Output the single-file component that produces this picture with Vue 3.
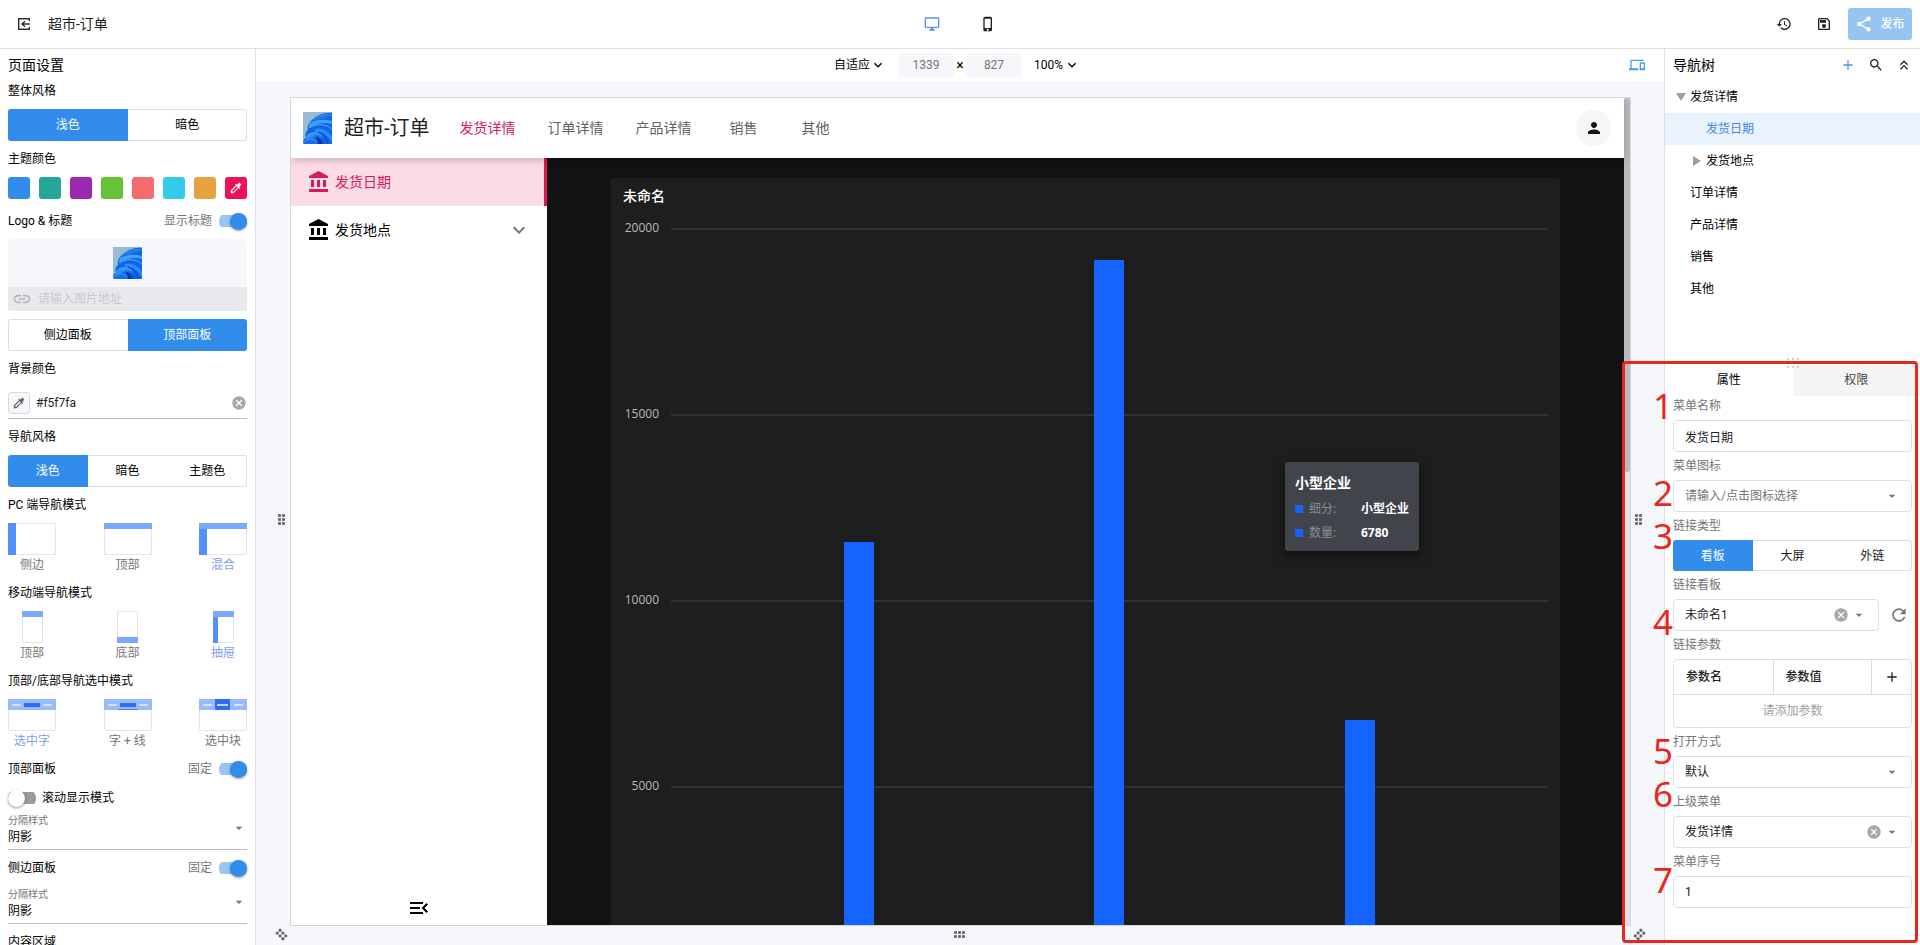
<script setup>
import { ref } from 'vue'

const icons = {
  desktop: 'M21 2H3c-1.1 0-2 .9-2 2v12c0 1.1.9 2 2 2h7v2H8v2h8v-2h-2v-2h7c1.1 0 2-.9 2-2V4c0-1.1-.9-2-2-2zm0 14H3V4h18v12z',
  phone: 'M15.5 1h-8C6.12 1 5 2.12 5 3.5v17C5 21.88 6.12 23 7.5 23h8c1.38 0 2.5-1.12 2.5-2.5v-17C18 2.12 16.88 1 15.5 1zm-4 21c-.83 0-1.5-.67-1.5-1.5s.67-1.5 1.5-1.5 1.5.67 1.5 1.5-.67 1.5-1.5 1.5zm4.5-4H7V4h9v14z',
  history: 'M13 3c-4.97 0-9 4.03-9 9H1l3.89 3.89.07.14L9 12H6c0-3.87 3.13-7 7-7s7 3.13 7 7-3.13 7-7 7c-1.93 0-3.68-.79-4.94-2.06l-1.42 1.42C8.27 19.99 10.51 21 13 21c4.97 0 9-4.03 9-9s-4.03-9-9-9zm-1 5v5l4.28 2.54.72-1.21-3.5-2.08V8H12z',
  save: 'M17 3H5c-1.11 0-2 .9-2 2v14c0 1.1.89 2 2 2h14c1.1 0 2-.9 2-2V7l-4-4zm2 16H5V5h11.17L19 7.83V19zm-7-7c-1.66 0-3 1.34-3 3s1.34 3 3 3 3-1.34 3-3-1.34-3-3-3zM6 6h9v4H6z',
  share: 'M18 16.08c-.76 0-1.44.3-1.96.77L8.91 12.7c.05-.23.09-.46.09-.7s-.04-.47-.09-.7l7.05-4.11c.54.5 1.25.81 2.04.81 1.66 0 3-1.34 3-3s-1.34-3-3-3-3 1.34-3 3c0 .24.04.47.09.7L8.04 9.81C7.5 9.31 6.79 9 6 9c-1.66 0-3 1.34-3 3s1.34 3 3 3c.79 0 1.5-.31 2.04-.81l7.12 4.16c-.05.21-.08.43-.08.65 0 1.61 1.31 2.92 2.92 2.92s2.92-1.31 2.92-2.92-1.31-2.92-2.92-2.92z',
  devices: 'M4 6h18V4H4c-1.1 0-2 .9-2 2v11H0v3h14v-3H4V6zm19 2h-6c-.55 0-1 .45-1 1v10c0 .55.45 1 1 1h6c.55 0 1-.45 1-1V9c0-.55-.45-1-1-1zm-1 9h-4v-7h4v7z',
  search: 'M15.5 14h-.79l-.28-.27C15.41 12.59 16 11.11 16 9.5 16 5.91 13.09 3 9.5 3S3 5.91 3 9.5 5.91 16 9.5 16c1.61 0 3.09-.59 4.23-1.57l.27.28v.79l5 4.99L20.49 19l-4.99-5zm-6 0C7.01 14 5 11.99 5 9.5S7.01 5 9.5 5 14 7.01 14 9.5 11.99 14 9.5 14z',
  add: 'M19 13h-6v6h-2v-6H5v-2h6V5h2v6h6v2z',
  cancel: 'M12 2C6.47 2 2 6.47 2 12s4.47 10 10 10 10-4.47 10-10S17.53 2 12 2zm5 13.59L15.59 17 12 13.41 8.41 17 7 15.59 10.59 12 7 8.41 8.41 7 12 10.59 15.59 7 17 8.41 13.41 12 17 15.59z',
  person: 'M12 12c2.21 0 4-1.79 4-4s-1.79-4-4-4-4 1.79-4 4 1.79 4 4 4zm0 2c-2.67 0-8 1.34-8 4v2h16v-2c0-2.66-5.33-4-8-4z',
  refresh: 'M17.65 6.35C16.2 4.9 14.21 4 12 4c-4.42 0-7.99 3.58-7.99 8s3.57 8 7.99 8c3.73 0 6.84-2.55 7.73-6h-2.08c-.82 2.33-3.04 4-5.65 4-3.31 0-6-2.69-6-6s2.69-6 6-6c1.66 0 3.14.69 4.22 1.78L13 11h7V4l-2.35 2.35z',
  link: 'M3.9 12c0-1.71 1.39-3.1 3.1-3.1h4V7H7c-2.76 0-5 2.24-5 5s2.24 5 5 5h4v-1.9H7c-1.71 0-3.1-1.39-3.1-3.1zM8 13h8v-2H8v2zm9-6h-4v1.9h4c1.71 0 3.1 1.39 3.1 3.1s-1.39 3.1-3.1 3.1h-4V17h4c2.76 0 5-2.24 5-5s-2.24-5-5-5z',
  picker: 'M20.71 5.63l-2.34-2.34c-.39-.39-1.02-.39-1.41 0l-3.12 3.12-1.93-1.91-1.41 1.41 1.42 1.42L3 16.25V21h4.75l8.92-8.92 1.42 1.42 1.41-1.41-1.92-1.92 3.12-3.12c.4-.4.4-1.03.01-1.42zM6.92 19L5 17.08l8.06-8.06 1.92 1.92L6.92 19z',
  collapse: 'M6 17.59L7.41 19 12 14.42 16.59 19 18 17.59l-6-6zM6 11l1.41 1.41L12 7.83l4.59 4.58L18 11l-6-6z',
  chevron: 'M16.59 8.59L12 13.17 7.41 8.59 6 10l6 6 6-6z',
  caret: 'M7 10l5 5 5-5z',
  bank: 'M4 10v7h3v-7H4zm6 0v7h3v-7h-3zM2 22h19v-3H2v3zm14-12v7h3v-7h-3zm-4.5-9L2 6v2h19V6l-9.5-5z',
  fold: 'M3 18h13v-2H3v2zm0-5h10v-2H3v2zm0-7v2h13V6H3zm18 9.59L17.42 12 21 8.41 19.59 7l-5 5 5 5L21 15.59z'
}

const swatches = [
  ['蓝色', 'c-blue'], ['青色', 'c-teal'], ['紫色', 'c-purple'], ['绿色', 'c-green'],
  ['红色', 'c-coral'], ['天蓝', 'c-cyan'], ['橙色', 'c-orange']
]
const pcModes = [
  { text: '侧边', kind: 'at-side' },
  { text: '顶部', kind: 'at-top' },
  { text: '混合', kind: 'at-both', on: true }
]
const mobileModes = [
  { text: '顶部', kind: 'at-top' },
  { text: '底部', kind: 'at-bottom' },
  { text: '抽屉', kind: 'at-both', on: true }
]
const pickModes = [
  { text: '选中字', kind: 'word', on: true },
  { text: '字 + 线', kind: 'line' },
  { text: '选中块', kind: 'block' }
]
const navTabs = ['发货详情', '订单详情', '产品详情', '销售', '其他']
const tree = [
  { text: '发货详情', mark: 'open', depth: 0 },
  { text: '发货日期', mark: '', depth: 1, on: true },
  { text: '发货地点', mark: 'shut', depth: 1 },
  { text: '订单详情', mark: '', depth: 0 },
  { text: '产品详情', mark: '', depth: 0 },
  { text: '销售', mark: '', depth: 0 },
  { text: '其他', mark: '', depth: 0 }
]
const axisTicks = [20000, 15000, 10000, 5000]
const bars = [11570, 19150, 6780]
const steps = [
  { n: 1, y: 22 }, { n: 2, y: 109 }, { n: 3, y: 152 }, { n: 4, y: 238 },
  { n: 5, y: 367 }, { n: 6, y: 410 }, { n: 7, y: 496 }
]

const showTitle = ref(true)
const topFixed = ref(true)
const scrollShow = ref(false)
const sideFixed = ref(true)
const bgColor = ref('#f5f7fa')
const menuName = ref('发货日期')
const menuIndex = ref('1')
</script>

<template>
  <div class="app">
    <svg class="defs" aria-hidden="true">
      <defs>
        <linearGradient id="sky" x1="0" y1="0" x2="1" y2="1">
          <stop offset="0" stop-color="#9dbdd3" />
          <stop offset="1" stop-color="#86b4d6" />
        </linearGradient>
        <linearGradient id="petal" x1="0" y1="0" x2="1" y2="1">
          <stop offset="0" stop-color="#46a8fb" />
          <stop offset="1" stop-color="#0747d3" />
        </linearGradient>
        <symbol id="bloom" viewBox="0 0 29 32" preserveAspectRatio="none">
          <rect width="29" height="32" fill="url(#sky)" />
          <path d="M29 1C22 0 14 3 9 8c-3 3-5 6-4 10-3 2-3 6-2 8-3 1-3 4-2 6h28z" fill="#0d68ec" />
          <path d="M29 2C21 1 13 4 8 9c6-1 12-3 21-3z" fill="url(#petal)" />
          <path d="M17 3c-3 2-5 4-7 6M22 2c-3 2-5 3-7 6" fill="none" stroke="#1e7df2" stroke-width=".8" />
          <path d="M7 11c7-4 15-4 22-2v3c-8-2-15-1-23 4z" fill="#3fa3fb" />
          <path d="M5 17c8-6 17-6 24-2v4c-8-4-14-5-24 1z" fill="#0f63ea" />
          <path d="M6 16c9-5 17-4 23 1" fill="none" stroke="#5ab4fd" stroke-width=".9" />
          <path d="M12 17c7-2 13 2 17 8v5c-4-7-9-10-17-10z" fill="#2b8cf8" />
          <path d="M3 25c4-6 12-7 18-1l1 8c-5-7-10-9-19-4z" fill="url(#petal)" />
          <path d="M1 31c4-5 10-5 14 1H1z" fill="#176ff0" />
          <path d="M12 24c4 1 7 4 8 8h-5c0-3-1-5-3-8z" fill="#0338b2" />
          <path d="M15 20c6 2 9 6 10 12" fill="none" stroke="#053fc0" />
          <path d="M1 30c4-4 9-4 13 0M4 24c5-4 10-4 15 0" fill="none" stroke="#4fadfc" stroke-width=".8" />
        </symbol>
      </defs>
    </svg>

    <header class="topbar">
      <div class="topbar-left">
        <button class="icon-btn" aria-label="返回">
          <svg class="i16 stroked" viewBox="0 0 16 16">
            <path d="M13.3 5V2.7H2.7v10.6h10.6V11M14 8H6M9 5.2L6 8l3 2.8" />
          </svg>
        </button>
        <span class="app-title">超市-订单</span>
      </div>
      <div class="topbar-mid">
        <button class="icon-btn blue" aria-label="桌面端"><svg class="i16" viewBox="0 0 24 24"><path :d="icons.desktop" /></svg></button>
        <button class="icon-btn" aria-label="移动端"><svg class="i16" viewBox="0 0 24 24"><path :d="icons.phone" /></svg></button>
      </div>
      <div class="topbar-right">
        <button class="icon-btn" aria-label="历史"><svg class="i16" viewBox="0 0 24 24"><path :d="icons.history" /></svg></button>
        <button class="icon-btn" aria-label="保存"><svg class="i16" viewBox="0 0 24 24"><path :d="icons.save" /></svg></button>
        <button class="publish"><svg class="i18" viewBox="0 0 24 24"><path :d="icons.share" /></svg>发布</button>
      </div>
    </header>

    <div class="work">
      <aside class="settings">
        <h2 class="panel-title">页面设置</h2>
        <h3 class="sect">整体风格</h3>
        <div class="seg"><button class="on">浅色</button><button>暗色</button></div>

        <h3 class="sect">主题颜色</h3>
        <div class="swatches">
          <button v-for="s in swatches" :key="s[1]" :class="['swatch', s[1]]" :aria-label="s[0]"></button>
          <button class="swatch c-pink" aria-label="自定义颜色"><svg class="i14" viewBox="0 0 24 24"><path :d="icons.picker" /></svg></button>
        </div>

        <div class="row">
          <h3>Logo &amp; 标题</h3>
          <label class="sw-label">显示标题<input v-model="showTitle" class="switch" type="checkbox" /></label>
        </div>
        <div class="logo-box">
          <div class="logo-view"><svg class="bloom"><use href="#bloom" /></svg></div>
          <label class="logo-url">
            <svg class="i20" viewBox="0 0 24 24"><path :d="icons.link" /></svg>
            <input type="text" placeholder="请输入图片地址" aria-label="图片地址" />
          </label>
        </div>
        <div class="seg gap-top"><button>侧边面板</button><button class="on">顶部面板</button></div>

        <h3 class="sect">背景颜色</h3>
        <div class="color-field">
          <button class="pick" aria-label="取色"><svg class="i14" viewBox="0 0 24 24"><path :d="icons.picker" /></svg></button>
          <input v-model="bgColor" type="text" aria-label="背景颜色" />
          <button class="clear" aria-label="清除"><svg class="i16" viewBox="0 0 24 24"><path :d="icons.cancel" /></svg></button>
        </div>

        <h3 class="sect">导航风格</h3>
        <div class="seg"><button class="on">浅色</button><button>暗色</button><button>主题色</button></div>

        <h3 class="sect">PC 端导航模式</h3>
        <div class="modes">
          <button v-for="m in pcModes" :key="m.text" :class="['mode', { on: m.on }]">
            <span :class="['thumb', m.kind]"><i class="bar-h"></i><i class="bar-v"></i></span>{{ m.text }}
          </button>
        </div>

        <h3 class="sect">移动端导航模式</h3>
        <div class="modes">
          <button v-for="m in mobileModes" :key="m.text" :class="['mode', { on: m.on }]">
            <span :class="['thumb', 'narrow', m.kind]"><i class="bar-h"></i><i class="bar-v"></i></span>{{ m.text }}
          </button>
        </div>

        <h3 class="sect">顶部/底部导航选中模式</h3>
        <div class="modes">
          <button v-for="m in pickModes" :key="m.text" :class="['mode', { on: m.on }]">
            <svg class="pick-thumb" viewBox="0 0 48 32">
              <rect x=".5" y=".5" width="47" height="31" rx="1" fill="#fff" stroke="#e4e4e4" />
              <rect width="48" height="11" fill="#97baff" />
              <path d="M4 6h9M35 6h9" stroke="#e6efff" stroke-width="1.4" />
              <rect v-if="m.kind !== 'block'" x="16" y="4" width="16" height="4" rx="1" fill="#2f6bee" />
              <path v-if="m.kind === 'line'" d="M14 10.4h20" stroke="#3e78ee" />
              <rect v-if="m.kind === 'block'" x="16" width="15" height="11" fill="#2f6bee" />
              <path v-if="m.kind === 'block'" d="M18 6h11" stroke="#fff" stroke-width="1.4" />
            </svg>{{ m.text }}
          </button>
        </div>

        <div class="row">
          <h3>顶部面板</h3>
          <label class="sw-label">固定<input v-model="topFixed" class="switch" type="checkbox" /></label>
        </div>
        <label class="scroll-row"><input v-model="scrollShow" class="switch" type="checkbox" />滚动显示模式</label>
        <label class="line-field">
          <span>分隔样式</span>
          <select><option>阴影</option></select>
          <svg class="i16" viewBox="0 0 24 24"><path :d="icons.caret" /></svg>
        </label>
        <div class="row">
          <h3>侧边面板</h3>
          <label class="sw-label">固定<input v-model="sideFixed" class="switch" type="checkbox" /></label>
        </div>
        <label class="line-field">
          <span>分隔样式</span>
          <select><option>阴影</option></select>
          <svg class="i16" viewBox="0 0 24 24"><path :d="icons.caret" /></svg>
        </label>
        <h3 class="sect">内容区域</h3>
      </aside>

      <main class="center">
        <div class="sizebar">
          <div></div>
          <div class="size-mid">
            <label class="mini-select fit"><select aria-label="适应方式"><option>自适应</option></select><svg class="i16" viewBox="0 0 24 24"><path :d="icons.chevron" /></svg></label>
            <input class="size" type="text" value="1339" aria-label="宽度" />
            <span class="times">×</span>
            <input class="size" type="text" value="827" aria-label="高度" />
            <label class="mini-select zoom"><select aria-label="缩放"><option>100%</option></select><svg class="i16" viewBox="0 0 24 24"><path :d="icons.chevron" /></svg></label>
          </div>
          <div class="size-end"><button class="icon-btn sky" aria-label="多端预览"><svg class="i16" viewBox="0 0 24 24"><path :d="icons.devices" /></svg></button></div>
        </div>

        <div class="stage">
          <span class="grip grip-left"><i v-for="d in 6" :key="d"></i></span>
          <div class="frame">
            <div class="site">
              <header class="site-head">
                <svg class="bloom"><use href="#bloom" /></svg>
                <strong class="site-title">超市-订单</strong>
                <nav class="site-tabs">
                  <a v-for="(t, i) in navTabs" :key="t" href="#" :class="{ on: i === 0 }">{{ t }}</a>
                </nav>
                <button class="avatar" aria-label="用户"><svg class="i18" viewBox="0 0 24 24"><path :d="icons.person" /></svg></button>
              </header>
              <div class="site-body">
                <nav class="side">
                  <a class="side-item on" href="#"><svg class="i24" viewBox="0 0 24 24"><path :d="icons.bank" /></svg>发货日期</a>
                  <a class="side-item" href="#"><svg class="i24" viewBox="0 0 24 24"><path :d="icons.bank" /></svg>发货地点<svg class="i24 more" viewBox="0 0 24 24"><path :d="icons.chevron" /></svg></a>
                  <button class="fold" aria-label="收起"><svg class="i24" viewBox="0 0 24 24"><path :d="icons.fold" /></svg></button>
                </nav>
                <section class="board">
                  <div class="card">
                    <h4>未命名</h4>
                    <div class="chart">
                      <div v-for="t in axisTicks" :key="t" class="tick"><span>{{ t }}</span><i></i></div>
                      <div class="bars">
                        <div v-for="b in bars" :key="b" class="band"><i :style="{ height: b / 200 + '%' }"></i></div>
                      </div>
                    </div>
                    <div class="tip">
                      <b>小型企业</b>
                      <div><i></i><span>细分:</span><em>小型企业</em></div>
                      <div><i></i><span>数量:</span><em>6780</em></div>
                    </div>
                  </div>
                </section>
              </div>
            </div>
            <div class="track"><div class="thumb-bar"></div></div>
          </div>
          <span class="grip grip-right"><i v-for="d in 6" :key="d"></i></span>
          <span class="grip corner corner-left"><i v-for="d in 6" :key="d"></i></span>
          <span class="grip wide"><i v-for="d in 6" :key="d"></i></span>
          <span class="grip corner corner-right"><i v-for="d in 6" :key="d"></i></span>
        </div>
      </main>

      <aside class="inspector">
        <section class="tree-pane">
          <div class="tree-head">
            <h2 class="panel-title">导航树</h2>
            <button class="icon-btn sky" aria-label="添加"><svg class="i16" viewBox="0 0 24 24"><path :d="icons.add" /></svg></button>
            <button class="icon-btn" aria-label="搜索"><svg class="i16" viewBox="0 0 24 24"><path :d="icons.search" /></svg></button>
            <button class="icon-btn" aria-label="全部收起"><svg class="i16" viewBox="0 0 24 24"><path :d="icons.collapse" /></svg></button>
          </div>
          <ul class="tree">
            <li v-for="n in tree" :key="n.text" :class="{ on: n.on, deep: n.depth }">
              <i :class="['mark', n.mark]"></i>{{ n.text }}
            </li>
          </ul>
          <span class="splitter"><i v-for="d in 6" :key="d"></i></span>
        </section>

        <section class="props">
          <div class="tabs"><button class="on">属性</button><button>权限</button></div>
          <div class="form">
            <label for="f-name">菜单名称</label>
            <input id="f-name" v-model="menuName" class="box" type="text" />
            <label for="f-icon">菜单图标</label>
            <div class="box-wrap">
              <input id="f-icon" class="box" type="text" placeholder="请输入/点击图标选择" />
              <svg class="i16 caret" viewBox="0 0 24 24"><path :d="icons.caret" /></svg>
            </div>
            <label id="f-type">链接类型</label>
            <div class="seg short" role="group" aria-labelledby="f-type"><button class="on">看板</button><button>大屏</button><button>外链</button></div>
            <label for="f-board">链接看板</label>
            <div class="with-refresh">
              <div class="box-wrap">
                <select id="f-board" class="box"><option>未命名1</option></select>
                <button class="clear" aria-label="清除"><svg class="i16" viewBox="0 0 24 24"><path :d="icons.cancel" /></svg></button>
                <svg class="i16 caret" viewBox="0 0 24 24"><path :d="icons.caret" /></svg>
              </div>
              <button class="icon-btn grey" aria-label="刷新"><svg class="i20" viewBox="0 0 24 24"><path :d="icons.refresh" /></svg></button>
            </div>
            <label id="f-params">链接参数</label>
            <table class="params" aria-labelledby="f-params">
              <thead>
                <tr><th>参数名</th><th>参数值</th><th class="plus"><button class="icon-btn" aria-label="添加参数"><svg class="i16" viewBox="0 0 24 24"><path :d="icons.add" /></svg></button></th></tr>
              </thead>
              <tbody><tr><td colspan="3">请添加参数</td></tr></tbody>
            </table>
            <label for="f-open">打开方式</label>
            <div class="box-wrap">
              <select id="f-open" class="box"><option>默认</option></select>
              <svg class="i16 caret" viewBox="0 0 24 24"><path :d="icons.caret" /></svg>
            </div>
            <label for="f-parent">上级菜单</label>
            <div class="box-wrap">
              <select id="f-parent" class="box"><option>发货详情</option></select>
              <button class="clear" aria-label="清除"><svg class="i16" viewBox="0 0 24 24"><path :d="icons.cancel" /></svg></button>
              <svg class="i16 caret" viewBox="0 0 24 24"><path :d="icons.caret" /></svg>
            </div>
            <label for="f-index">菜单序号</label>
            <input id="f-index" v-model="menuIndex" class="box" type="text" />
          </div>
        </section>
      </aside>
    </div>

    <div class="guide">
      <span v-for="s in steps" :key="s.n" :style="{ top: s.y + 'px' }">{{ s.n }}</span>
    </div>
  </div>
</template>

<style>
body { margin: 0; }
</style>

<style scoped>
* { box-sizing: border-box; }
.app {
  position: relative;
  display: flex;
  flex-direction: column;
  height: 100vh;
  overflow: hidden;
  background: #fff;
  color: #000;
  font: 12px/20px Roboto, "Noto Sans CJK SC", sans-serif;
}
h2, h3, h4, ul { margin: 0; padding: 0; font-weight: 400; font-size: 12px; }
button, input, select {
  margin: 0; padding: 0; border: 0; background: none; color: inherit; font: inherit; outline: 0;
}
button { cursor: pointer; }
input, select { min-width: 0; }
select { appearance: none; }
a { color: inherit; text-decoration: none; }
svg { flex: none; display: block; fill: currentColor; }
.defs { position: absolute; width: 0; height: 0; }
.stroked { fill: none; stroke: #303030; stroke-width: 1.4; }
.i14 { width: 14px; height: 14px; }
.i16 { width: 16px; height: 16px; }
.i18 { width: 18px; height: 18px; }
.i20 { width: 20px; height: 20px; }
.i24 { width: 24px; height: 24px; }
.bloom { width: 29px; height: 32px; }
.icon-btn { display: flex; align-items: center; justify-content: center; color: #212121; }
.icon-btn.blue { color: #5b8fe8; }
.icon-btn.sky { color: #4a9af0; }
.icon-btn.grey { color: #757575; }

/* top bar */
.topbar {
  flex: none;
  display: grid;
  grid-template-columns: 1fr auto 1fr;
  align-items: center;
  height: 49px;
  padding: 0 8px;
  border-bottom: 1px solid #e0e0e0;
}
.topbar-left { display: flex; align-items: center; gap: 16px; padding-left: 8px; }
.app-title { font-size: 14px; color: #212121; }
.topbar-mid { display: flex; gap: 40px; }
.topbar-right { display: flex; justify-content: flex-end; align-items: center; gap: 24px; }
.topbar-right .publish { margin-left: -8px; }
.publish {
  display: flex; align-items: center; justify-content: center; gap: 7px;
  width: 64px; height: 32px; border-radius: 3px; background: #97c5f3; color: #fff; font-weight: 500;
}

.work { flex: 1; min-height: 0; display: flex; }

/* settings */
.settings {
  flex: none; width: 256px; padding: 0 8px; overflow: hidden; border-right: 1px solid #e0e0e0;
}
.panel-title { font-size: 14px; line-height: 32px; }
.sect { margin: 8px 0; line-height: 20px; }
.panel-title + .sect { margin-top: 0; }
.seg { display: flex; height: 32px; border-radius: 3px; overflow: hidden; box-shadow: inset 0 0 0 1px #dcdee2; }
.seg button { flex: 1; }
.seg .on { background: #318cec; color: #fff; }
.seg.short { height: 31px; }
.gap-top { margin-top: 8px; }
.swatches { display: flex; justify-content: space-between; }
.swatch { display: flex; align-items: center; justify-content: center; width: 22px; height: 22px; border-radius: 3px; color: #fff; }
.c-blue { background: #318cec; }
.c-teal { background: #26a69a; }
.c-purple { background: #9c27b0; }
.c-green { background: #67c23a; }
.c-coral { background: #f56c6c; }
.c-cyan { background: #32ccea; }
.c-orange { background: #e6a23c; }
.c-pink { background: #ee1155; }
.row { display: flex; align-items: center; justify-content: space-between; height: 28px; margin-top: 4px; }
.swatches + .row { margin-top: 8px; }
.sw-label { display: flex; align-items: center; gap: 7px; color: #757575; }
.switch {
  appearance: none; display: flex; align-items: center; flex: none;
  width: 28px; height: 17px; cursor: pointer;
  background: linear-gradient(#9a9a9a, #9a9a9a) center / 28px 12px no-repeat;
  border-radius: 8px;
}
.switch::before {
  content: ""; width: 17px; height: 17px; border-radius: 50%; background: #fff;
  box-shadow: 0 1px 3px rgba(0, 0, 0, .4);
}
.switch:checked { justify-content: flex-end; background-image: linear-gradient(#98c5f5, #98c5f5); }
.switch:checked::before { background: #318cec; }
.logo-box { margin-top: 4px; border-radius: 3px; overflow: hidden; background: #f5f7fb; }
.logo-view { display: flex; align-items: center; justify-content: center; height: 48px; }
.logo-url { display: flex; align-items: center; gap: 6px; height: 24px; padding: 0 4px; background: #e8e9ed; color: #b4b6ba; }
.logo-url input { flex: 1; }
.logo-url input::placeholder { color: #c8cacf; }
.color-field { display: flex; align-items: center; gap: 6px; height: 32px; border-bottom: 1px solid #bdbdbd; }
.color-field input { flex: 1; color: #212121; }
.pick { display: flex; align-items: center; justify-content: center; width: 22px; height: 22px; border: 1px solid #d4d9e4; border-radius: 3px; background: #f5f7fb; color: #616161; }
.clear { color: #a8a8a8; }
.modes { display: flex; justify-content: space-between; }
.mode { display: flex; flex-direction: column; align-items: center; width: 48px; color: #757575; white-space: nowrap; }
.mode.on { color: #7d9fe6; }
.thumb { position: relative; width: 48px; height: 32px; border: 1px solid #e4e4e4; border-radius: 1px; }
.thumb.narrow { width: 21px; }
.pick-thumb { width: 48px; height: 32px; }
.bar-h, .bar-v { display: none; position: absolute; }
.bar-h { top: -1px; left: -1px; right: -1px; height: 6px; background: #7ba8fb; }
.bar-v { top: -1px; left: -1px; bottom: -1px; width: 8px; background: #548ffb; }
.narrow .bar-v { width: 5px; }
.at-top .bar-h, .at-bottom .bar-h, .at-both .bar-h, .at-both .bar-v, .at-side .bar-v { display: block; }
.at-bottom .bar-h { top: auto; bottom: -1px; }
.at-both .bar-v { top: 5px; }
.scroll-row { display: flex; align-items: center; gap: 6px; height: 30px; }
.line-field { position: relative; display: block; height: 37px; padding-top: 1px; border-bottom: 1px solid #bdbdbd; }
.row + .line-field { margin-top: 5px; }
.line-field span { display: block; font-size: 10px; line-height: 14px; color: #757575; }
.line-field select { display: block; width: 100%; height: 18px; line-height: 18px; }
.line-field svg { position: absolute; right: 0; top: 7px; color: #757575; }

/* centre */
.center { flex: 1; min-width: 0; display: flex; flex-direction: column; background: #f5f7fb; }
.sizebar { flex: none; display: grid; grid-template-columns: 1fr auto 1fr; align-items: center; height: 32px; background: #fff; }
.size-mid { display: flex; align-items: center; margin-right: 6px; }
.mini-select { display: flex; align-items: center; position: relative; }
.mini-select select { width: 100%; }
.mini-select svg { position: absolute; right: 0; pointer-events: none; }
.fit { width: 52px; margin-right: 12px; }
.zoom { width: 46px; margin-left: 12px; }
.size { width: 56px; height: 24px; border-radius: 4px; background: #f5f7fb; text-align: center; color: #757575; }
.times { width: 12px; text-align: center; font-size: 14px; }
.size-end { display: flex; justify-content: flex-end; padding-right: 19px; }
.stage {
  flex: 1; min-height: 0; display: grid;
  grid-template: 16px minmax(0, 1fr) 19px / 34px minmax(0, 1fr) 33px;
}
.frame {
  grid-area: 2 / 2; display: flex; min-height: 0; overflow: hidden;
  border: 1px solid #d4d8de; background: #fff;
}
.grip { display: grid; grid-template-columns: 3px 3px; gap: 1px; align-self: center; }
.grip i { width: 3px; height: 3px; border-radius: 1px; background: #6a6a6a; }
.grip-left { grid-area: 2 / 1; justify-self: end; margin: 16px 5px 0 0; }
.grip-right { grid-area: 2 / 3; justify-self: start; margin: 16px 0 0 4px; }
.grip.wide { grid-area: 3 / 2; grid-template-columns: 3px 3px 3px; justify-self: center; margin: 0 2px 3px 0; }
.corner { grid-template-columns: 3px 3px 3px; margin-bottom: 3px; }
.corner-left { grid-area: 3 / 1; justify-self: end; margin-right: 3px; transform: rotate(45deg); }
.corner-right { grid-area: 3 / 3; justify-self: start; margin-left: 3px; transform: rotate(-45deg); }

.site { flex: 1; min-width: 0; display: flex; flex-direction: column; }
.site-head {
  position: relative; z-index: 1; flex: none; display: flex; align-items: center;
  height: 60px; padding: 0 12px; background: #fff; box-shadow: 0 2px 8px rgba(0, 0, 0, .2);
}
.site-title { margin-left: 12px; font-size: 20px; font-weight: 400; color: #212121; white-space: nowrap; }
.site-tabs { display: flex; margin-left: 14px; font-size: 14px; color: #616161; }
.site-tabs a { min-width: 72px; padding: 0 16px; text-align: center; white-space: nowrap; }
.site-tabs .on { color: #d81b55; }
.avatar { display: flex; align-items: center; justify-content: center; width: 36px; height: 36px; margin-left: auto; border-radius: 50%; background: #f6f6f6; color: #111; }
.site-body { flex: 1; min-height: 0; display: flex; }
.side { flex: none; display: flex; flex-direction: column; width: 256px; font-size: 14px; }
.side-item { display: flex; align-items: center; gap: 4px; height: 48px; padding: 0 16px; }
.side-item.on { background: #fbdbe6; color: #d81b55; border-right: 3px solid #e0164f; }
.side-item .more { margin-left: auto; color: #757575; }
.fold { align-self: center; margin: auto 0 5px; }
.board { flex: 1; min-width: 0; padding: 20px 64px 0; overflow: hidden; background: #121212; }
.card { position: relative; height: 860px; padding: 8px 12px; border-radius: 4px; background: #1e1e1e; color: #fff; }
.card h4 { font-size: 14px; font-weight: 500; }
.chart { position: relative; height: 744px; margin-top: 22px; display: flex; flex-direction: column; }
.tick { flex: 1; display: flex; gap: 12px; font: 12px/20px "Open Sans", "Noto Sans", sans-serif; color: #b9b8ce; color: #b8babd; }
.tick span { width: 36px; margin-top: -10px; text-align: right; }
.tick i { flex: 1; height: 2px; background: #303134; }
.bars { position: absolute; inset: 0 0 0 48px; display: flex; padding: 0 63px; }
.band { flex: 1; display: flex; align-items: flex-end; justify-content: center; }
.band i { width: 30px; background: #1664ff; }
.tip {
  position: absolute; left: 674px; top: 284px; width: 134px; padding: 10px 10px 6px;
  border-radius: 3px; background: #41444b; box-shadow: 0 4px 12px rgba(0, 0, 0, .5);
  font: 12px/24px "Open Sans", "Noto Sans CJK SC", sans-serif;
}
.tip b { display: block; margin-bottom: 3px; font-size: 14px; line-height: 22px; font-weight: 700; }
.tip div { display: flex; align-items: center; }
.tip i { width: 8px; height: 8px; background: #1664ff; }
.tip span { width: 52px; margin-left: 6px; color: #8a8d93; }
.tip em { font-style: normal; font-weight: 700; white-space: nowrap; }
.track { flex: none; width: 6px; background: #dfe1e4; }
.thumb-bar { height: 374px; border-radius: 3px; background: #b9babd; }

/* inspector */
.inspector { flex: none; display: flex; flex-direction: column; width: 256px; border-left: 1px solid #e0e0e0; }
.tree-pane { position: relative; flex: 0 0 315px; }
.tree-head { display: flex; align-items: center; gap: 12px; height: 32px; padding: 0 8px; }
.tree-head h2 { margin-right: auto; }
.tree { list-style: none; }
.tree li { display: flex; align-items: center; gap: 4px; height: 32px; padding-left: 11px; }
.tree li.deep { padding-left: 27px; }
.tree li.on { background: #e8f3fd; color: #4a86e0; }
.mark { display: flex; align-items: center; justify-content: center; width: 10px; height: 10px; }
.mark.open::before { content: ""; border: 5px solid transparent; border-top: 8px solid #9e9e9e; border-bottom: 0; }
.mark.shut::before { content: ""; border: 5px solid transparent; border-left: 8px solid #9e9e9e; border-right: 0; }
.splitter { position: absolute; left: 122px; bottom: -4px; z-index: 1; display: grid; grid-template-columns: 2px 2px 2px; gap: 6px 3px; }
.splitter i { width: 2px; height: 2px; background: #d0d0d0; }
.tabs { display: flex; height: 32px; }
.tabs button { flex: 1; background: #f5f5f5; color: #424242; }
.tabs .on { background: #fff; color: #000; }
.form { padding: 0 8px; color: #212121; }
.form > label { display: block; margin: 4px 0; color: #757575; }
.form > label:first-child { margin-top: 0; }
.box { display: block; width: 100%; height: 32px; padding: 0 11px; border: 1px solid #dcdee2; border-radius: 4px; background: #fff; }
.box::placeholder { color: #757575; }
.box-wrap { position: relative; }
.with-refresh .box-wrap { flex: 1; }
.caret { position: absolute; right: 12px; top: 8px; color: #757575; pointer-events: none; }
.box-wrap .clear { position: absolute; right: 30px; top: 8px; }
.with-refresh { display: flex; align-items: center; gap: 10px; padding-right: 3px; }
.params { width: 100%; border: 1px solid #dcdee2; border-radius: 4px; border-spacing: 0; table-layout: fixed; }
.params th { height: 35px; padding: 0 12px; text-align: left; font-weight: 500; border-bottom: 1px solid #dcdee2; }
.params th + th { border-left: 1px solid #dcdee2; }
.params .plus { width: 40px; padding: 0; }
.plus button { margin: 0 auto; }
.params td { height: 32px; padding: 0; text-align: center; color: #9e9e9e; }

/* numbered guide over the inspector */
.guide { position: absolute; top: 361px; right: 2px; bottom: 2px; width: 296px; border: 3px solid #e8281e; border-radius: 4px; pointer-events: none; }
.guide span { position: absolute; left: 28px; font: 35px/40px "Noto Sans", sans-serif; color: #e8281e; }
</style>
